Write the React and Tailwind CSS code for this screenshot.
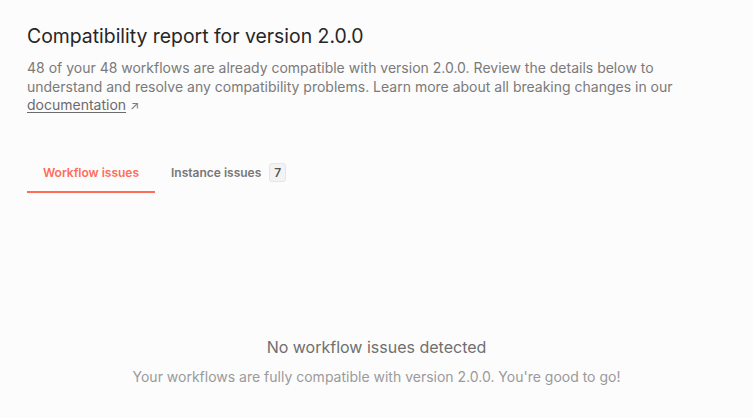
export default function App() {
  return (
    <div className="min-h-[418px] w-full bg-[#fcfcfc] font-['Inter',sans-serif]">
      <div className="px-[27px] pt-[24px]">
        <h1 className="text-[19.4px] leading-[24px] text-[#262626] font-normal">Compatibility report for version 2.0.0</h1>
        <p className="mt-[11px] text-[14px] leading-[18.5px] text-[#7a7a7a]">
          48 of your 48 workflows are already compatible with version 2.0.0. Review the details below to understand and resolve any compatibility problems. Learn more about all breaking changes in our{" "}
          <a className="underline underline-offset-2 text-[#6b6b6b]" href="#">documentation</a>
          <span className="ml-1 text-[12px]">↗</span>
        </p>
        <div className="mt-[39px] flex items-end">
          <div className="flex h-[38px] w-[128px] items-center justify-center border-b-2 border-[#ff6d5a] text-[12px] font-semibold text-[#ff6d5a]">
            Workflow issues
          </div>
          <div className="flex h-[38px] items-center gap-2 pl-[16px] pb-[2px] text-[12px] font-semibold text-[#777]">
            Instance issues
            <span className="flex h-[19px] min-w-[17px] items-center justify-center rounded-[3px] border border-[#e6e6e6] bg-[#f3f3f3] px-1 text-[12px] text-[#555]">7</span>
          </div>
        </div>
      </div>
      <div className="mt-[144px] flex flex-col items-center">
        <div className="text-[16px] leading-[20px] text-[#6f6f6f]">No workflow issues detected</div>
        <div className="mt-[11px] text-[14px] leading-[18px] text-[#9a9a9a]">Your workflows are fully compatible with version 2.0.0. You're good to go!</div>
      </div>
    </div>
  );
}
